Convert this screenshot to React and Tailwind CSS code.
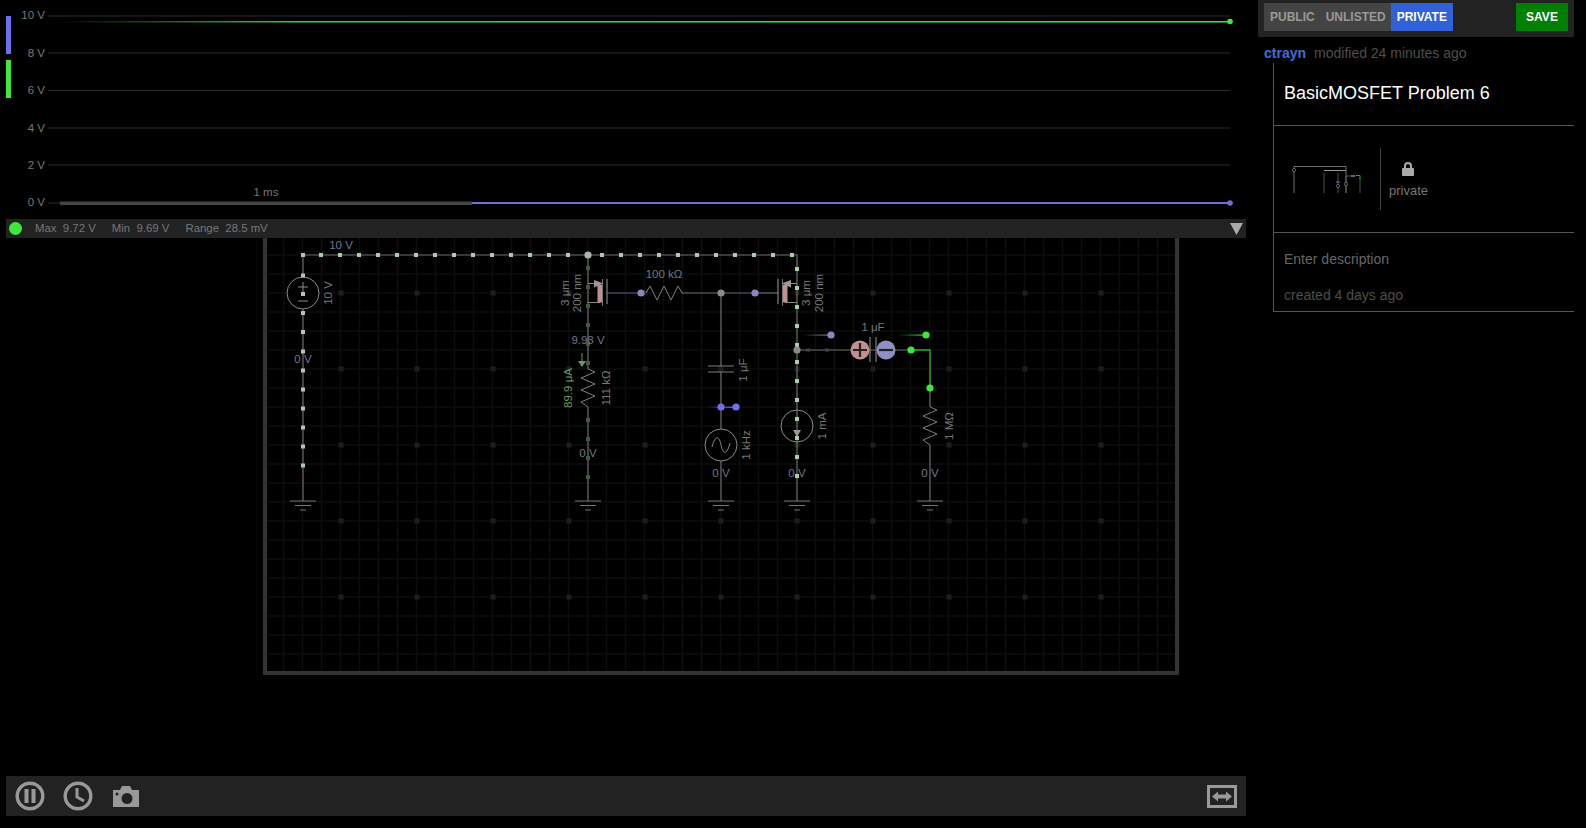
const FONT = { fontFamily: '"Liberation Sans", Arial, sans-serif' };

const range = (from, to, step) => {
  const out = [];
  for (let v = from; v <= to; v += step) out.push(v);
  return out;
};

const scopeTicks = [
  { label: '10 V', y: 16, textY: 19 },
  { label: '8 V', y: 53, textY: 57 },
  { label: '6 V', y: 90.5, textY: 94 },
  { label: '4 V', y: 128, textY: 132 },
  { label: '2 V', y: 165, textY: 169 },
  { label: '0 V', y: 203, textY: 206 },
];

// wire dots of the running simulation, [x, y]
const lightDots = [
  [303, 255],
  ...range(321, 569, 19).map((x) => [x, 255]),
  ...range(602, 792, 19).map((x) => [x, 255]),
  ...[275.5, 294, 313, 332, 351.5, 370.5, 389.5, 408.5, 427.5, 446.5, 465.5].map((y) => [303, y]),
  ...[269, 288, 307, 326, 345, 362, 381, 400, 419, 438, 457, 476].map((y) => [797, y]),
];
const darkDots = [268, 287, 306, 325, 344, 363, 420, 439, 458, 477].map((y) => [588, y]);

const voltLabels = [
  ['10 V', 341, 245],
  ['0 V', 303, 359],
  ['9.98 V', 588, 340],
  ['0 V', 588, 453],
  ['0 V', 721, 473],
  ['0 V', 797, 473],
  ['0 V', 930, 473],
];
const sideLabels = [
  ['10 V', 328, 293],
  ['3 μm', 565, 293],
  ['200 nm', 577, 293],
  ['111 kΩ', 606, 388],
  ['1 μF', 743, 370],
  ['1 kHz', 746, 445],
  ['3 μm', 806, 293],
  ['200 nm', 819, 293],
  ['1 mA', 822, 426],
  ['1 MΩ', 949, 426],
];

const WIRE = '#6a6a6a';

function Scope() {
  return (
    <svg width="1240" height="219" viewBox="6 0 1240 219" className="block shrink-0">
      <defs>
        <linearGradient id="greenFade" x1="0" x2="1" y1="0" y2="0">
          <stop offset="0" stopColor="#3be83b" stopOpacity="0" />
          <stop offset="0.2" stopColor="#3be83b" stopOpacity="0.9" />
          <stop offset="1" stopColor="#3be83b" />
        </linearGradient>
      </defs>
      <rect x="6" y="16" width="5" height="38" fill="#6f6fee" />
      <rect x="6" y="60" width="5" height="38" fill="#3be83b" />
      {scopeTicks.map((t) => (
        <g key={t.label}>
          <line x1="48" x2="1230" y1={t.y} y2={t.y} stroke="#2a2a2a" strokeWidth="1" />
          <text x="45" y={t.textY} textAnchor="end" fontSize="11.5" fill="#777" style={FONT}>
            {t.label}
          </text>
        </g>
      ))}
      <rect x="60" y="21" width="1170" height="1.5" fill="url(#greenFade)" />
      <circle cx="1230" cy="21.5" r="2.8" fill="#3be83b" />
      <rect x="472" y="202" width="758" height="2" fill="#6f6fd8" />
      <rect x="60" y="201.5" width="412" height="3.5" fill="#444" />
      <circle cx="1230" cy="203" r="2.8" fill="#6f6fd8" />
      <text x="266" y="196" textAnchor="middle" fontSize="11.5" fill="#777" style={FONT}>
        1 ms
      </text>
    </svg>
  );
}

function StatusBar() {
  return (
    <div className="h-[19px] shrink-0 bg-[#222222] flex items-center pl-[3px] pr-[3px] text-[11.4px] text-[#777777]">
      <span className="w-[13px] h-[13px] rounded-full bg-[#3be83b]" />
      <span className="ml-[13px] whitespace-pre">Max  9.72 V</span>
      <span className="ml-[16px] whitespace-pre">Min  9.69 V</span>
      <span className="ml-[16px] whitespace-pre">Range  28.5 mV</span>
      <svg width="13" height="12" viewBox="0 0 13 12" className="ml-auto">
        <polygon points="0,0 13,0 6.5,12" fill="#aaaaaa" />
      </svg>
    </div>
  );
}

function Mosfet({ flip }) {
  // drawn for the left device, mirrored around x=692.5 for the right one
  return (
    <g transform={flip ? 'translate(1385 0) scale(-1 1)' : undefined}>
      <path d="M588 283.500H600M588 302.500H600" stroke="#8a8a8a" strokeWidth="1" fill="none" />
      <rect x="597.500" y="285" width="4.500" height="17.500" fill="#c09090" />
      <polygon points="594,280 603.500,283.500 594,287.500" fill="#999" />
      <line x1="602.500" x2="602.500" y1="279" y2="306" stroke="#777" strokeWidth="1" />
      <line x1="607" x2="607" y1="279" y2="304" stroke="#777" strokeWidth="1.300" />
    </g>
  );
}

function Ground({ x }) {
  return (
    <path
      d={`M${x - 13} 501H${x + 13}M${x - 8} 505.5H${x + 8}M${x - 3} 510H${x + 3}`}
      stroke="#777"
      strokeWidth="1"
      fill="none"
    />
  );
}

function Schematic() {
  return (
    <svg width="908" height="433" viewBox="267 238 908 433" className="block" style={FONT}>
      <defs>
        <linearGradient id="probeBlue" x1="0" x2="1" y1="0" y2="0">
          <stop offset="0" stopColor="#8888bb" stopOpacity="0" />
          <stop offset="1" stopColor="#8888bb" />
        </linearGradient>
        <linearGradient id="probeGreen" x1="0" x2="1" y1="0" y2="0">
          <stop offset="0" stopColor="#3be83b" stopOpacity="0" />
          <stop offset="1" stopColor="#3be83b" />
        </linearGradient>
        <linearGradient id="probeIndigo" x1="0" x2="1" y1="0" y2="0">
          <stop offset="0" stopColor="#7070ee" stopOpacity="0" />
          <stop offset="1" stopColor="#7070ee" />
        </linearGradient>
      </defs>

      {/* grid */}
      {range(284, 1175, 19).map((x) => (
        <line key={x} x1={x - 0.5} x2={x - 0.5} y1="238" y2="671" stroke="#0d0d0d" strokeWidth="1.6" />
      ))}
      {range(255, 671, 19).map((y) => (
        <line key={y} x1="267" x2="1175" y1={y} y2={y} stroke="#0d0d0d" strokeWidth="1.6" />
      ))}
      {range(341, 1175, 76).map((x) =>
        range(293, 671, 76).map((y) => (
          <rect key={`${x}-${y}`} x={x - 2.5} y={y - 2.5} width="5" height="5" fill="#1e1e1e" />
        )),
      )}

      {/* wires */}
      <path d="M303 501V255H797V501" stroke={WIRE} strokeWidth="1.2" fill="none" />
      <path d="M588 255V369M588 407V501" stroke={WIRE} strokeWidth="1.2" fill="none" />
      <path d="M607 293H641" stroke="#5e5e80" strokeWidth="1.2" />
      <path d="M684 293H721" stroke={WIRE} strokeWidth="1.2" />
      <path d="M721 293H755" stroke="#5e5e80" strokeWidth="1.2" />
      <path d="M755 293H778" stroke={WIRE} strokeWidth="1.2" />
      <path d="M721 293V366M721 372V501" stroke={WIRE} strokeWidth="1.2" fill="none" />
      <path d="M797 350H911" stroke={WIRE} strokeWidth="1.2" />
      <path d="M911 350H930V388" stroke="#2fae2f" strokeWidth="1.4" fill="none" />
      <path d="M930 388V407M930 445V501" stroke={WIRE} strokeWidth="1.2" fill="none" />

      {/* mosfets */}
      <Mosfet />
      <Mosfet flip />

      {/* resistors */}
      <path
        d="M646 293L650 286L657 300L664 286L671 300L678 286L682 293H684"
        stroke="#808080"
        strokeWidth="1"
        fill="none"
      />
      <path
        d="M588 369L595 372L581 378L595 384L581 390L595 396L581 402L588 407"
        stroke="#808080"
        strokeWidth="1"
        fill="none"
      />
      <path
        d="M930 407L937 410L923 416L937 422L923 428L937 434L923 440L930 445"
        stroke="#808080"
        strokeWidth="1"
        fill="none"
      />

      {/* capacitors */}
      <path d="M708 366H734M708 372H734" stroke="#808080" strokeWidth="1.2" fill="none" />
      <path d="M870 337V362M876 337V362" stroke="#808080" strokeWidth="1.2" fill="none" />
      <circle cx="860" cy="350" r="9.5" fill="#c09090" />
      <path d="M853 350H867M860 343V357" stroke="#222" strokeWidth="2.2" />
      <circle cx="886" cy="350" r="9.5" fill="#9090c0" />
      <path d="M879 350H893" stroke="#222" strokeWidth="2.2" />

      {/* sources */}
      <circle cx="303" cy="293" r="16" stroke="#8a8a8a" strokeWidth="1" fill="#000" />
      <path d="M298 287H308M303 282V292M298 301H308" stroke="#8a8a8a" strokeWidth="1" />
      <circle cx="721" cy="445" r="16" stroke="#8a8a8a" strokeWidth="1" fill="#000" />
      <path d="M712 447C715 435 719 435 721 445C723 455 727 455 730 443" stroke="#8a8a8a" strokeWidth="1" fill="none" />
      <circle cx="797" cy="426" r="16" stroke="#8a8a8a" strokeWidth="1" fill="none" />
      <polygon points="793,430 801,430 797,437" fill="#999" />
      <Ground x={303} />
      <Ground x={588} />
      <Ground x={721} />
      <Ground x={797} />
      <Ground x={930} />

      {/* moving dots */}
      {lightDots.map(([x, y]) => (
        <rect key={`l${x}-${y}`} x={x - 2} y={y - 2} width="4" height="4" fill="#a5cfa5" />
      ))}
      {darkDots.map(([x, y]) => (
        <rect key={`d${y}`} x={x - 2} y={y - 2} width="4" height="4" fill="#3c5c3c" />
      ))}
      <path d="M806 350h4M825 350h4" stroke="#444" strokeWidth="3" />

      {/* nodes */}
      <circle cx="588" cy="255" r="3.6" fill="#a8b8a8" />
      <circle cx="641" cy="293" r="3.6" fill="#8888bb" />
      <circle cx="721" cy="293" r="3.6" fill="#8a8a8a" />
      <circle cx="755" cy="293" r="3.6" fill="#8888bb" />
      <circle cx="797" cy="350" r="3.6" fill="#8a8a8a" />
      <rect x="708" y="406.5" width="28" height="1.5" fill="url(#probeIndigo)" />
      <circle cx="721" cy="407" r="3.6" fill="#7070ee" />
      <circle cx="736" cy="407" r="3.6" fill="#7070ee" />
      <rect x="803" y="334.5" width="28" height="1.2" fill="url(#probeBlue)" />
      <circle cx="831" cy="335" r="3.6" fill="#8888bb" />
      <rect x="898" y="334.5" width="28" height="1.2" fill="url(#probeGreen)" />
      <circle cx="926" cy="335" r="3.6" fill="#3be83b" />
      <circle cx="911" cy="350" r="3.6" fill="#3be83b" />
      <circle cx="930" cy="388" r="3.6" fill="#3be83b" />

      {/* current arrow */}
      <path d="M582 353V362" stroke="#6a9a6a" strokeWidth="1" />
      <polygon points="578,361 586,361 582,367" fill="#6a9a6a" />

      {/* labels */}
      {voltLabels.map(([t, x, y]) => (
        <text key={`${t}${x}`} x={x} y={y + 4} textAnchor="middle" fontSize="11.5" fill="#747490">
          {t}
        </text>
      ))}
      {sideLabels.map(([t, x, y]) => (
        <text
          key={`${t}${x}`}
          x={x}
          y={y + 4}
          transform={`rotate(-90 ${x} ${y})`}
          textAnchor="middle"
          fontSize="11.5"
          fill="#777"
        >
          {t}
        </text>
      ))}
      <text x="568" y="392" transform="rotate(-90 568 388)" textAnchor="middle" fontSize="11.5" fill="#6a9a6a">
        89.9 μA
      </text>
      <text x="664" y="278" textAnchor="middle" fontSize="11.5" fill="#777">
        100 kΩ
      </text>
      <text x="873" y="331" textAnchor="middle" fontSize="11.5" fill="#777">
        1 μF
      </text>
    </svg>
  );
}

function Toolbar() {
  return (
    <div className="h-[40px] shrink-0 bg-[#222222] flex items-center pl-[9px] pr-[9px]">
      <svg width="30" height="30" viewBox="0 0 30 30" className="shrink-0">
        <circle cx="15" cy="15" r="12.8" stroke="#999" strokeWidth="3.4" fill="none" />
        <rect x="9.5" y="8" width="4" height="14" fill="#999" />
        <rect x="16.5" y="8" width="4" height="14" fill="#999" />
      </svg>
      <svg width="30" height="30" viewBox="0 0 30 30" className="ml-[18px] shrink-0">
        <circle cx="15" cy="15" r="12.8" stroke="#999" strokeWidth="3.4" fill="none" />
        <path d="M14 7V16L21 20" stroke="#999" strokeWidth="3" fill="none" />
      </svg>
      <svg width="26" height="21" viewBox="0 0 26 21" className="ml-[20px] mt-[1px] shrink-0">
        <path
          fillRule="evenodd"
          fill="#999"
          d="M0 4H7L9 0H17L19 4H26V21H0ZM14 7A5.500 5.500 0 1 0 14 18A5.500 5.500 0 1 0 14 7ZM4 6.500A1.500 1.500 0 1 0 4 9.500A1.500 1.500 0 1 0 4 6.500Z"
        />
      </svg>
      <svg width="30" height="23" viewBox="0 0 30 23" className="ml-auto shrink-0">
        <rect x="1.5" y="1.5" width="27" height="20" stroke="#999" strokeWidth="3" fill="none" />
        <polygon points="5,11.5 11,6.5 11,9.5 19,9.5 19,6.5 25,11.5 19,16.5 19,13.5 11,13.5 11,16.5" fill="#999" />
      </svg>
    </div>
  );
}

function Thumbnail() {
  return (
    <svg width="80" height="40" viewBox="1290 158 80 40" className="block shrink-0">
      <path d="M1294 192V165.500H1346V192" stroke="#8a8a8a" strokeWidth="0.8" fill="none" />
      <path d="M1324 192V172M1338 192V172M1346 192V175H1351" stroke="#666" strokeWidth="0.8" fill="none" />
      <path d="M1324 169.500H1346" stroke="#999" strokeWidth="1" fill="none" />
      <path d="M1360 177V192" stroke="#666" strokeWidth="0.8" />
      <path d="M1356 174.500H1360V178" stroke="#2fae2f" strokeWidth="1" fill="none" />
      <circle cx="1294" cy="169" r="1.6" stroke="#888" strokeWidth="0.7" fill="#000" />
      <circle cx="1338" cy="185" r="1.6" stroke="#888" strokeWidth="0.7" fill="#000" />
      <circle cx="1346" cy="183" r="1.6" stroke="#888" strokeWidth="0.7" fill="#000" />
      <path d="M1336 181H1340" stroke="#7070ee" strokeWidth="1" />
      <path d="M1351 175H1355" stroke="#8888bb" strokeWidth="1.5" />
    </svg>
  );
}

function SidePanel() {
  return (
    <div className="w-[316px] shrink-0 flex flex-col text-[14px]">
      <div className="h-[37px] bg-[#222222] flex items-start pt-[3px] pl-[6px] pr-[6px]">
        <div className="h-[28px] flex bg-[#444444] text-[12px] font-bold text-[#999999] leading-[28px]">
          <span className="pl-[6px] pr-[5px]">PUBLIC</span>
          <span className="pl-[6px] pr-[5px]">UNLISTED</span>
          <span className="px-[6px] bg-[#2f62d8] text-white">PRIVATE</span>
        </div>
        <button className="ml-auto h-[28px] w-[52px] bg-[#008000] text-white text-[12px] font-bold">SAVE</button>
      </div>
      <div className="h-[26px] flex items-center pl-[6px] pt-[6px]">
        <span className="font-bold text-[#3a6fd8]">ctrayn</span>
        <span className="ml-[8px] text-[#4d4d4d]">modified 24 minutes ago</span>
      </div>
      <div className="ml-[15px] border-l border-l-[#555555] border-b border-b-[#555555] flex flex-col">
        <div className="h-[63px] border-b border-[#555555] pl-[10px] flex items-center text-[18px] text-white pb-[1px]">
          BasicMOSFET Problem 6
        </div>
        <div className="h-[107px] border-b border-[#555555] pl-[16px] flex items-center">
          <Thumbnail />
          <div className="ml-[10px] w-px h-[62px] bg-[#444444]" />
          <div className="ml-[8px] mt-[4px] flex flex-col items-center text-[13px] text-[#777777]">
            <svg width="12" height="14" viewBox="0 0 12 14" className="-translate-x-px">
              <path
                fill="#aaa"
                d="M1 6H2V4A4 4 0 0 1 10 4V6H11A1 1 0 0 1 12 7V13A1 1 0 0 1 11 14H1A1 1 0 0 1 0 13V7A1 1 0 0 1 1 6ZM4 6H8V4A2 2 0 0 0 4 4Z"
              />
            </svg>
            <span className="mt-[5px]">private</span>
          </div>
        </div>
        <div className="h-[78px] pl-[10px] flex flex-col">
          <span className="mt-[16px] text-[#666666]">Enter description</span>
          <span className="mt-[15px] text-[#4d4d4d]">created 4 days ago</span>
        </div>
      </div>
    </div>
  );
}

export default function App() {
  return (
    <div className="w-[1586px] h-[828px] bg-black overflow-hidden flex pl-[6px] gap-[12px]" style={FONT}>
      <div className="w-[1240px] shrink-0 flex flex-col">
        <Scope />
        <StatusBar />
        <div className="ml-[257px] w-[916px] h-[437px] shrink-0 border-[4px] border-t-0 border-[#333333] overflow-hidden">
          <Schematic />
        </div>
        <div className="flex-1" />
        <div className="mb-[12px]">
          <Toolbar />
        </div>
      </div>
      <SidePanel />
    </div>
  );
}
